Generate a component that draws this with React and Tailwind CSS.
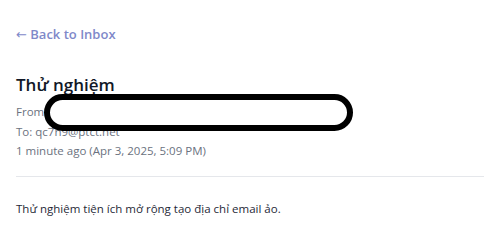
export default function App() {
  return (
    <div className="min-h-screen bg-white px-4 pt-[24px] font-['Open_Sans',sans-serif]">
      <a className="block text-[13px] font-semibold leading-[20px] text-[#7f89c9]">
        <span className="font-['DejaVu_Sans',sans-serif] font-normal">←</span> Back to Inbox
      </a>

      <h1 className="mt-[28px] text-[17px] font-semibold leading-[24px] text-[#111827]">
        Thử nghiệm
      </h1>

      <div className="relative mt-[5px] text-[11.5px] leading-[19.5px] text-[#6b7280]">
        <div>From: hidden@example.com</div>
        <div>To: qc7n9@ptct.net</div>
        <div>1 minute ago (Apr 3, 2025, 5:09 PM)</div>
        {/* redaction scribble */}
        <svg
          className="absolute left-[28px] top-[-8px]"
          width="310"
          height="37"
          viewBox="0 0 310 37"
        >
          <rect x="3" y="3" width="303" height="31" rx="15.5" fill="white" stroke="black" strokeWidth="6" />
        </svg>
      </div>

      <div className="mt-[15px] border-t border-[#e5e7eb]" />

      <p className="mt-[22px] text-[11.5px] leading-[20px] text-[#1f2937]">
        Thử nghiệm tiện ích mở rộng tạo địa chỉ email ảo.
      </p>
    </div>
  );
}
